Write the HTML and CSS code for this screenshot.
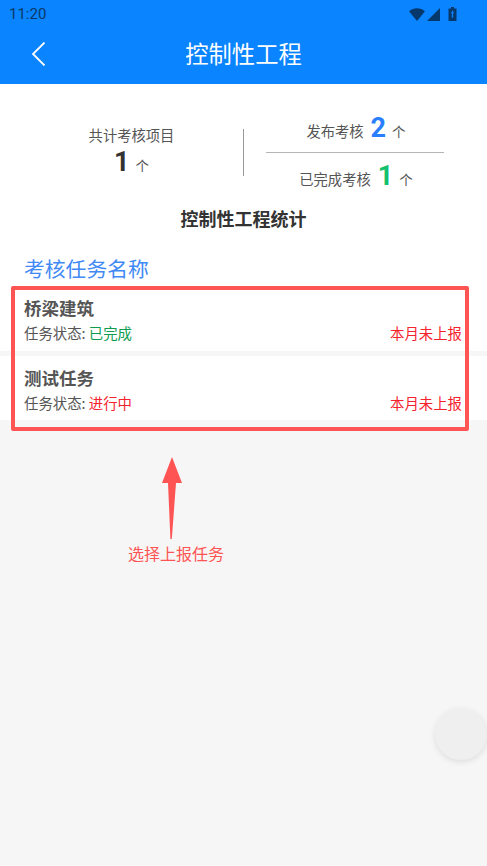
FILE: index.html
```html
<!DOCTYPE html>
<html lang="zh-CN">
<head>
  <meta charset="UTF-8" />
  <meta name="viewport" content="width=device-width, initial-scale=1.0"/>
  <title>控制性工程</title>
  <link rel="stylesheet" href="styles.css">
</head>
<body>
  <div class="top">
    <div class="status">
      <span class="time">11:20</span>
      <div class="status-icons">
        <svg width="16" height="13" viewBox="0 0 16 13"><path d="M0 3.200C4.500 -0.800 11.500 -0.800 16 3.200L8 13Z" fill="#06386b"/></svg>
        <svg width="13" height="13" viewBox="0 0 13 13"><path d="M13 0V13H0Z" fill="#06386b"/></svg>
        <svg class="battery" width="9" height="14" viewBox="0 0 9 14"><path d="M3 0H6V1.500H8.500V14H0.500V1.500H3Z" fill="#06386b"/><path d="M4.500 3L6 6.500H5L5.300 10.500H3.700L4 6.500H3Z" fill="#0a84ff"/></svg>
      </div>
    </div>
    <div class="nav">
      <svg class="back" width="15" height="24" viewBox="0 0 15 24"><path d="M13.500 0.500L2 12L13.500 23.500" fill="none" stroke="#fff" stroke-width="1.800"/></svg>
      <h1>控制性工程</h1>
    </div>
  </div>

  <div class="stats">
    <div class="stats-row">
      <div class="stat-total">
        <div class="label">共计考核项目</div>
        <div><b class="num">1</b><span class="unit">个</span></div>
      </div>
      <div class="divider"></div>
      <div class="stat-split">
        <div class="stat-line"><span class="label">发布考核</span><b class="num blue">2</b><span class="unit">个</span></div>
        <div class="rule"></div>
        <div class="stat-line stat-line-low"><span class="label">已完成考核</span><b class="num green">1</b><span class="unit">个</span></div>
      </div>
    </div>
    <h2>控制性工程统计</h2>
    <h3>考核任务名称</h3>
  </div>

  <div class="task">
    <div class="task-name">桥梁建筑</div>
    <div class="task-info">
      <span>任务状态: <span class="done">已完成</span></span>
      <span class="red">本月未上报</span>
    </div>
  </div>
  <div class="task task-last">
    <div class="task-name">测试任务</div>
    <div class="task-info">
      <span>任务状态: <span class="red">进行中</span></span>
      <span class="red">本月未上报</span>
    </div>
  </div>

  <!-- annotations on top of the screenshot -->
  <div class="mark-box"></div>
  <svg class="mark-arrow" width="22" height="83" viewBox="0 0 22 83"><path d="M11 0L21 26H15L10.800 82H9.400L7 26H1Z" fill="#ff5454"/></svg>
  <div class="mark-text">选择上报任务</div>
  <div class="float-btn"></div>
</body>
</html>
```

FILE: styles.css
```css
* {
  margin: 0;
  padding: 0;
  box-sizing: border-box;
}

html, body {
  height: 100%;
  overflow: hidden;
}

body {
  position: relative;
  background: #f6f6f6;
  color: #333;
  font-family: "Noto Sans CJK SC", "Noto Sans", sans-serif;
}

.top {
  height: 84px;
  background: #0a84ff;
}

.status {
  height: 28px;
  padding: 0 30px 0 9px;
  display: flex;
  justify-content: space-between;
  align-items: center;
}

.time {
  font-family: Roboto, sans-serif;
  font-size: 15px;
  color: #0b3a68;
}

.status-icons {
  display: flex;
  align-items: center;
  gap: 2px;
}

.battery {
  margin-left: 6px;
}

.nav {
  position: relative;
  height: 56px;
  padding-bottom: 6px;
  display: flex;
  justify-content: center;
  align-items: center;
}

.back {
  position: absolute;
  left: 31px;
  top: 14px;
}

h1 {
  font-size: 23.300px;
  font-weight: 400;
  color: #fff;
}

.stats {
  height: 200px;
  background: #fff;
  padding-top: 36px;
}

.stats-row {
  height: 64px;
  display: flex;
  align-items: center;
}

.stat-total {
  width: 243px;
  padding-left: 20px;
  padding-bottom: 4px;
  text-align: center;
  line-height: 25px;
}

.label {
  font-size: 14.300px;
  color: #555;
}

.num {
  font-family: Roboto, sans-serif;
  font-size: 27px;
  font-weight: 700;
  margin: 0 6px 0 7px;
  line-height: 30px;
}

.stat-total .num {
  margin-left: 0;
}

.unit {
  font-size: 13.500px;
  color: #555;
}

.blue {
  color: #2a7fff;
}

.green {
  color: #14c06c;
}

.divider {
  width: 1px;
  height: 47px;
  background: #999;
}

.stat-split {
  width: 178px;
  margin-left: 22px;
  padding-left: 2px;
  text-align: center;
}

.stat-line {
  height: 32px;
  line-height: 32px;
}

.stat-line-low {
  padding-top: 1px;
}

.rule {
  height: 1px;
  margin: 7px 0 7px -2px;
  background: #b5b5b5;
}

h2 {
  margin-top: 21px;
  text-align: center;
  font-size: 18px;
  line-height: 26px;
  font-weight: 700;
}

h3 {
  margin-top: 22px;
  padding-left: 24px;
  font-size: 20.800px;
  line-height: 30px;
  font-weight: 400;
  color: #4189f5;
}

.task {
  height: 67px;
  padding: 0 25px 0 24px;
  background: #fff;
  margin-bottom: 5px;
}

.task-last {
  height: 64px;
  margin-bottom: 0;
}

.task-name {
  padding-top: 12px;
  font-size: 17.500px;
  line-height: 24px;
  font-weight: 700;
  color: #555;
}

.task-last .task-name {
  padding-top: 10px;
}

.task-info {
  margin-top: 3px;
  display: flex;
  justify-content: space-between;
  font-size: 14.400px;
  line-height: 20px;
  color: #555;
}

.done {
  color: #0d9d50;
}

.red {
  color: #f5222d;
}

.mark-box {
  position: absolute;
  left: 11px;
  top: 286px;
  width: 458px;
  height: 145px;
  border: 4px solid #ff5454;
  border-radius: 2px;
}

.mark-arrow {
  position: absolute;
  left: 161px;
  top: 457px;
}

.mark-text {
  position: absolute;
  left: 128px;
  top: 542px;
  font-size: 16px;
  line-height: 22px;
  color: #ff5454;
}

.float-btn {
  position: absolute;
  left: 435px;
  top: 708px;
  width: 52px;
  height: 52px;
  border-radius: 50%;
  background: #efefef;
  box-shadow: 0 2px 6px rgba(0, 0, 0, 0.1);
}
```
